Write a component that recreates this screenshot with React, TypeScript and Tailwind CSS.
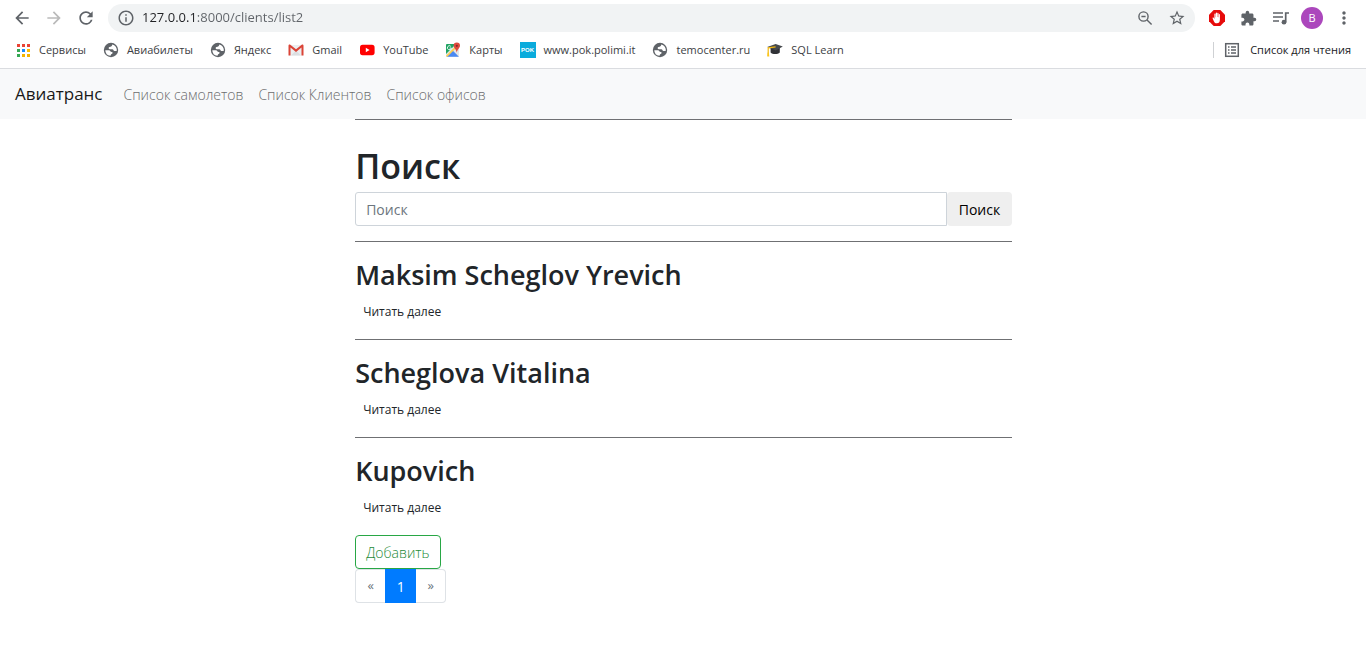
import React from "react";
import {
  MdArrowBack,
  MdArrowForward,
  MdRefresh,
  MdInfoOutline,
  MdStarBorder,
  MdExtension,
  MdMoreVert,
} from "react-icons/md";

function AppsIcon() {
  const colors = ["#ea4335", "#ea4335", "#ea4335", "#34a853", "#1a8cff", "#fbbc04", "#34a853", "#f4b400", "#f4b400"];
  return (
    <svg width="13" height="13" viewBox="0 0 13 13" aria-hidden="true">
      {colors.map((c, i) => (
        <rect key={i} x={(i % 3) * 5} y={Math.floor(i / 3) * 5} width="3" height="3" fill={c} />
      ))}
    </svg>
  );
}

function GlobeIcon() {
  return (
    <svg width="16" height="16" viewBox="0 0 16 16" aria-hidden="true">
      <circle cx="8" cy="8" r="7.2" fill="#5f6368" />
      <path
        d="M9.2 2.4C9.4 4.2 8 4.6 6.4 4.9 5.2 5.2 5.4 7.3 7 7.3h2.3c1.3 0 1 1.7 2.1 1.7h2.3A5.8 5.8 0 0 0 9.2 2.4z"
        fill="#fff"
      />
      <path
        d="M2.3 8.2h3.6c1.5 0 1.4 1.8 2.8 1.9 1.5.1 1 1.7 0 1.8-1 .1-.7 1.2-1.3 1.9A5.8 5.8 0 0 1 2.3 8.2z"
        fill="#fff"
      />
    </svg>
  );
}

function GmailIcon() {
  return (
    <svg width="16" height="16" viewBox="0 0 16 16" aria-hidden="true">
      <path d="M1 3h14v10.5H1z" fill="#eceff1" />
      <path d="M3 13.5 8 8.5l5 5z" fill="#dcdfe1" />
      <path d="M.5 13.5V3.6C.5 2.6 1.6 2.2 2.3 2.8L8 7.3l5.7-4.5c.7-.6 1.8-.2 1.8.8v9.9h-2V5.6L8 9.9 2.5 5.6v7.9z" fill="#db4437" />
    </svg>
  );
}

function YouTubeIcon() {
  return (
    <svg width="16" height="16" viewBox="0 0 16 16" aria-hidden="true">
      <rect x="1" y="2.8" width="14.6" height="10.4" rx="2.6" fill="#f00" />
      <path d="M6.8 5.8v4.4L10.6 8z" fill="#fff" />
    </svg>
  );
}

function MapsIcon() {
  return (
    <svg width="16" height="16" viewBox="0 0 16 16" aria-hidden="true">
      <rect x="1" y="2" width="13" height="13" rx="1" fill="#e3e6e8" />
      <path d="M1 3a1 1 0 0 1 1-1h9L1 12z" fill="#1fa463" />
      <path d="M1.6 14.8 7.7 8.4l6.2 6.4z" fill="#4a89f3" />
      <path d="M1 13.8 12.8 2 14 3.2 2 15z" fill="#ffd04b" />
      <path d="M5.8 4.3A2 2 0 1 0 6.4 6H4.6" fill="none" stroke="#fff" strokeWidth=".9" />
      <path d="M11.8.6a3.2 3.2 0 0 0-3.2 3.2c0 2.5 2.8 3.2 3.2 7 .4-3.8 3.2-4.5 3.2-7A3.2 3.2 0 0 0 11.8.6z" fill="#dd4b3e" />
      <circle cx="11.8" cy="3.8" r="1.1" fill="#822c27" />
    </svg>
  );
}

function PokIcon() {
  return (
    <span className="flex size-4 items-center justify-center bg-[#0aabdc] font-['Liberation_Sans',sans-serif] text-[6px] leading-none font-bold text-white">
      POK
    </span>
  );
}

function HatIcon() {
  return (
    <svg width="16" height="16" viewBox="0 0 16 16" aria-hidden="true">
      <path d="M3.6 6v4.6c1.8 2 7.2 2 9.2 0V6z" fill="#303236" />
      <path d="M.2 5 8.6 2l7.2 2.6-7 4z" fill="#46494d" />
      <path d="M8.6 4.8 1.2 5.8V14" fill="none" stroke="#f4b912" strokeWidth="1.2" />
      <path d="M.6 10.4h1.3l.4 4H.2z" fill="#fbc61c" />
    </svg>
  );
}

function AdblockIcon() {
  return (
    <svg width="16" height="16" viewBox="0 0 16 16" aria-hidden="true">
      <path d="M4.7 0h6.6L16 4.7v6.6L11.3 16H4.7L0 11.3V4.7z" fill="#e60b0b" />
      <path
        d="M3.6 8.3c-.3-.8.8-1.2 1.2-.4l.6 1V4.2c0-.8 1.1-.8 1.1 0v3h.3V3.1c0-.8 1.2-.8 1.2 0v4h.3V3.4c0-.8 1.2-.8 1.2 0v3.8h.3V4.5c0-.8 1.1-.8 1.1 0v5.2c0 2.4-1.2 3.6-3 3.6-1.9 0-2.6-1-3.3-2.6z"
        fill="#fff"
      />
    </svg>
  );
}

function ZoomOutIcon() {
  return (
    <svg width="18" height="18" viewBox="0 0 18 18" fill="none" stroke="#5f6368" strokeWidth="1.4" aria-hidden="true">
      <circle cx="7.5" cy="7.5" r="4.6" />
      <path d="M11 11l4.6 4.6M5.4 7.5h4.2" />
    </svg>
  );
}

function PlaylistIcon() {
  return (
    <svg width="18" height="18" viewBox="0 0 18 18" fill="none" stroke="#5f6368" strokeWidth="1.7" aria-hidden="true">
      <path d="M1 4h10M1 8h10M1 12h6M13.7 13V4H17" />
      <circle cx="12" cy="13.2" r="2.4" fill="#5f6368" stroke="none" />
    </svg>
  );
}

function ReadingListIcon() {
  return (
    <svg width="16" height="16" viewBox="0 0 16 16" fill="none" stroke="#5f6368" strokeWidth="1.5" aria-hidden="true">
      <rect x="1.7" y="1.7" width="12.6" height="12.6" />
      <path d="M4 5h1.5M4 8h1.5M4 11h1.5M7 5h5M7 8h5M7 11h5" />
    </svg>
  );
}

const bookmarks = [
  { label: "Сервисы", icon: <AppsIcon /> },
  { label: "Авиабилеты", icon: <GlobeIcon /> },
  { label: "Яндекс", icon: <GlobeIcon /> },
  { label: "Gmail", icon: <GmailIcon /> },
  { label: "YouTube", icon: <YouTubeIcon /> },
  { label: "Карты", icon: <MapsIcon /> },
  { label: "www.pok.polimi.it", icon: <PokIcon /> },
  { label: "temocenter.ru", icon: <GlobeIcon /> },
  { label: "SQL Learn", icon: <HatIcon /> },
];

const clients = ["Maksim Scheglov Yrevich", "Scheglova Vitalina", "Kupovich"];

function BrowserBar() {
  return (
    <header className="border-b border-[#dadce0] bg-white text-[#3c4043]">
      <div className="flex h-9 items-center pr-4 pl-3 text-[#5f6368]">
        <div className="flex items-center gap-3">
          <button aria-label="Назад"><MdArrowBack size={20} /></button>
          <button aria-label="Вперёд" className="text-[#bababa]"><MdArrowForward size={20} /></button>
          <button aria-label="Обновить"><MdRefresh size={20} /></button>
        </div>
        <div className="ml-3 flex h-7 flex-1 items-center rounded-full bg-[#f1f3f4] px-[9px]">
          <button aria-label="Сведения о сайте"><MdInfoOutline size={18} /></button>
          <input
            type="text"
            aria-label="Адрес"
            defaultValue="127.0.0.1:8000/clients/list2"
            className="ml-[7px] min-w-0 flex-1 bg-[linear-gradient(90deg,#202124_55px,#5f6368_55px)] bg-clip-text text-[13px] text-transparent outline-none"
          />
          <button aria-label="Масштаб" className="mr-[14px]"><ZoomOutIcon /></button>
          <button aria-label="Добавить в закладки"><MdStarBorder size={18} /></button>
        </div>
        <div className="ml-[14px] flex items-center gap-[15px]">
          <button aria-label="Блокировщик"><AdblockIcon /></button>
          <button aria-label="Расширения"><MdExtension size={17} /></button>
          <button aria-label="Плейлист"><PlaylistIcon /></button>
          <button aria-label="Профиль" className="-ml-1 flex size-[22px] items-center justify-center rounded-full bg-[#ab47bc] text-[11px] text-white">
            B
          </button>
          <button aria-label="Меню" className="-mx-1"><MdMoreVert size={20} /></button>
        </div>
      </div>
      <div className="flex h-8 items-center pr-[15px] pb-1 pl-[15px] text-[11px]">
        <nav aria-label="Закладки" className="flex flex-1 items-center gap-[17px]">
          {bookmarks.map((b) => (
            <a key={b.label} href="#" className="flex items-center gap-2 whitespace-nowrap">
              <span className="flex size-4 items-center justify-center">{b.icon}</span>
              {b.label}
            </a>
          ))}
        </nav>
        <a href="#" className="flex items-center gap-2.5 border-l border-[#cfd1d4] pl-2.5 whitespace-nowrap text-[#202124]">
          <ReadingListIcon />
          Список для чтения
        </a>
      </div>
    </header>
  );
}

export default function App() {
  return (
    <div className="min-h-screen bg-white font-['Open_Sans','Noto_Sans',sans-serif] text-[#212529]">
      <BrowserBar />
      <nav aria-label="Основное меню" className="flex h-[50px] items-center gap-[15px] bg-[#f8f9fa] px-[15px] text-[14px] font-light text-[#6b6c6d]">
        <a href="#" className="mr-1.5 text-[17px] font-normal text-[#191919]">Авиатранс</a>
        <a href="#">Список самолетов</a>
        <a href="#">Список Клиентов</a>
        <a href="#">Список офисов</a>
      </nav>
      <main className="ml-[26%] w-[48.1%]">
        <form className="border-t border-[#6f7073] pt-[26px] pb-[15px]" onSubmit={(e) => e.preventDefault()}>
          <h1 className="mb-1.5 text-[34px] leading-10 font-semibold">
            <label htmlFor="search">Поиск</label>
          </h1>
          <div className="flex h-[34px] text-[14px]">
            <input
              id="search"
              type="text"
              placeholder="Поиск"
              className="min-w-0 flex-1 rounded-l-[3px] border border-[#ced4da] px-2.5 placeholder:text-[#6c757d]"
            />
            <button className="rounded-[4px] bg-[#efefef] px-3 text-black">Поиск</button>
          </div>
        </form>
        {clients.map((name) => (
          <article key={name} className="h-[98px] border-t border-[#6f7073] pt-[15px]">
            <h2 className="text-[27px] leading-9 font-semibold">{name}</h2>
            <a href="#" className="mt-[9px] ml-2 inline-block text-[12px] leading-5">Читать далее</a>
          </article>
        ))}
        <button className="block h-[34px] rounded-[4px] border border-[#28a745] px-2.5 text-[14px] font-light text-[#1c8a37]">
          Добавить
        </button>
        <nav aria-label="Страницы" className="flex h-[34px] text-[13px] text-[#6c757d]">
          <a href="#" className="flex w-[30px] items-center justify-center rounded-l-[4px] border border-r-0 border-[#dee2e6]">«</a>
          <a href="#" aria-current="page" className="flex w-[31px] items-center justify-center bg-[#007bff] text-[14px] text-white">1</a>
          <a href="#" className="flex w-[30px] items-center justify-center rounded-r-[4px] border border-l-0 border-[#dee2e6]">»</a>
        </nav>
      </main>
    </div>
  );
}
